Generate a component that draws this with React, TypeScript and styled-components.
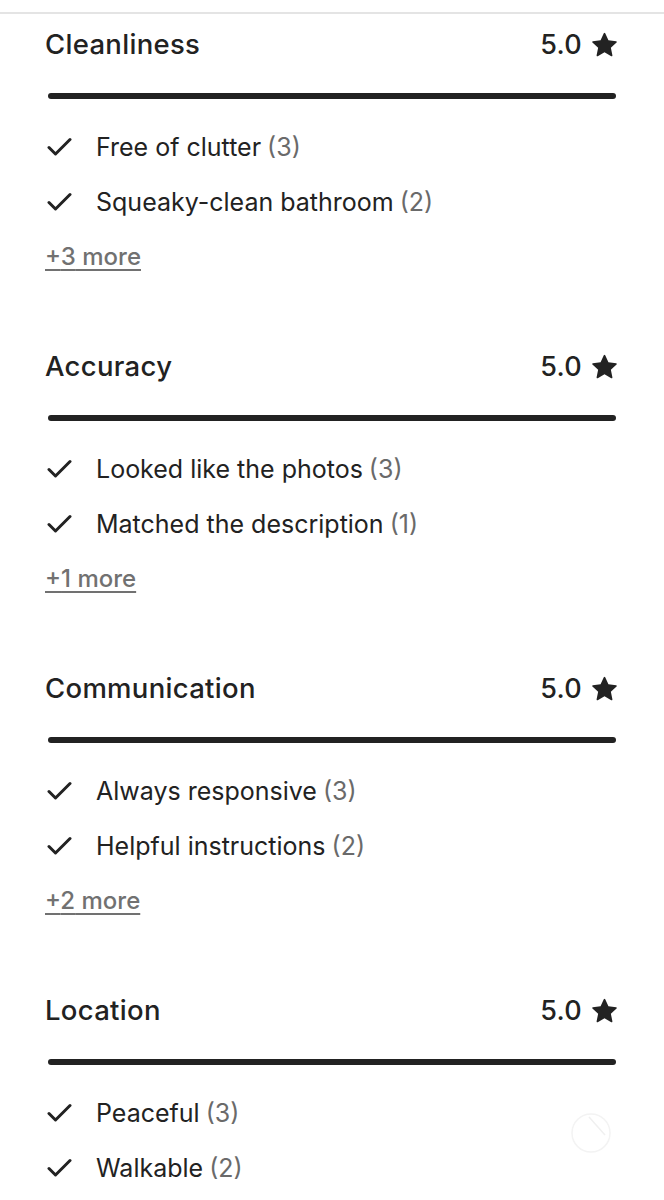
import * as React from 'react';
import styled, { createGlobalStyle } from 'styled-components';

const GlobalStyle = createGlobalStyle`
  html, body {
    margin: 0;
    padding: 0;
    background: #ffffff;
  }
  body {
    font-family: Inter, "Noto Sans", "Liberation Sans", sans-serif;
    color: #222222;
    -webkit-font-smoothing: antialiased;
  }
`;

const Page = styled.div`
  position: relative;
  margin-top: 12px;
  border-top: 2px solid #e4e4e4;
  padding: 10px 47px 0 45px;
  height: 1186px;
  overflow: hidden;
  box-sizing: border-box;
`;

const Section = styled.section`
  display: flex;
  flex-direction: column;
  margin-bottom: 61px;
`;

const Header = styled.div`
  display: flex;
  align-items: center;
  justify-content: space-between;
  height: 40px;
`;

const Title = styled.h2`
  margin: 0;
  font-size: 27.5px;
  font-weight: 500;
  letter-spacing: 0.3px;
  line-height: 40px;
`;

const Score = styled.div`
  display: flex;
  align-items: center;
  gap: 10px;
  font-size: 27px;
  font-weight: 500;
  letter-spacing: 0.3px;
`;

const Bar = styled.div`
  margin: 29px 1px 0 3px;
  height: 6px;
  border-radius: 3px;
  background: #222222;
`;

const List = styled.ul`
  list-style: none;
  margin: 20px 0 0;
  padding: 0;
`;

const Item = styled.li`
  display: flex;
  align-items: center;
  height: 55px;
  font-size: 25px;
  font-weight: 400;
`;

const CheckBox = styled.span`
  display: flex;
  align-items: center;
  width: 49px;
  padding-left: 2px;
`;

const Count = styled.span`
  color: #6a6a6a;
  margin-left: 6px;
`;

const More = styled.a`
  align-self: flex-start;
  height: 56px;
  line-height: 56px;
  font-size: 24px;
  font-weight: 500;
  color: #717171;
  text-decoration: underline;
  text-underline-offset: 4px;
  text-decoration-thickness: 1.5px;
`;

const Ghost = styled.div`
  position: absolute;
  left: 567px;
  top: 1093px;
  width: 48px;
  height: 48px;
`;

const Check = () => (
  <svg width="25" height="20" viewBox="0 0 25 20" fill="none">
    <path d="M2 10.5 L8.5 17 L23 2.5" stroke="#222222" strokeWidth="3" strokeLinecap="round" strokeLinejoin="round" />
  </svg>
);

const Star = () => (
  <svg width="25" height="25" viewBox="0 0 32 32" fill="#222222">
    <path d="M15.094 1.579l-4.124 8.885-9.86 1.27a1 1 0 0 0-.542 1.736l7.293 6.565-1.965 9.852a1 1 0 0 0 1.483 1.061L16 25.951l8.625 4.997a1 1 0 0 0 1.482-1.06l-1.965-9.853 7.293-6.565a1 1 0 0 0-.541-1.735l-9.86-1.271-4.127-8.885a1 1 0 0 0-1.814 0z" />
  </svg>
);

type Category = {
  title: string;
  score: string;
  items: { label: string; count: number }[];
  more?: number;
};

const categories: Category[] = [
  {
    title: 'Cleanliness',
    score: '5.0',
    items: [
      { label: 'Free of clutter', count: 3 },
      { label: 'Squeaky-clean bathroom', count: 2 },
    ],
    more: 3,
  },
  {
    title: 'Accuracy',
    score: '5.0',
    items: [
      { label: 'Looked like the photos', count: 3 },
      { label: 'Matched the description', count: 1 },
    ],
    more: 1,
  },
  {
    title: 'Communication',
    score: '5.0',
    items: [
      { label: 'Always responsive', count: 3 },
      { label: 'Helpful instructions', count: 2 },
    ],
    more: 2,
  },
  {
    title: 'Location',
    score: '5.0',
    items: [
      { label: 'Peaceful', count: 3 },
      { label: 'Walkable', count: 2 },
    ],
  },
];

export default function App() {
  return (
    <>
      <GlobalStyle />
      <Page>
        {categories.map((c) => (
          <Section key={c.title}>
            <Header>
              <Title>{c.title}</Title>
              <Score>
                {c.score}
                <Star />
              </Score>
            </Header>
            <Bar />
            <List>
              {c.items.map((it) => (
                <Item key={it.label}>
                  <CheckBox>
                    <Check />
                  </CheckBox>
                  {it.label}
                  <Count>({it.count})</Count>
                </Item>
              ))}
            </List>
            {c.more ? <More href="#">+{c.more} more</More> : null}
          </Section>
        ))}
        <Ghost>
          <svg width="48" height="48" viewBox="0 0 48 48" fill="none">
            <circle cx="24" cy="26" r="19" stroke="#f3f3f3" strokeWidth="1.5" />
            <path d="M22 10 L38 28" stroke="#f0f0f0" strokeWidth="1.5" />
          </svg>
        </Ghost>
      </Page>
    </>
  );
}
